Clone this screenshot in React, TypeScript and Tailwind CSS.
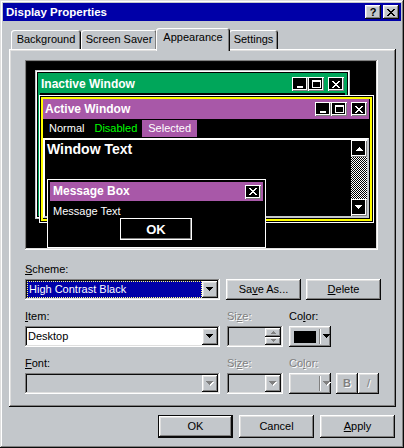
import React from "react";

const face = "bg-[#c3c7cb]";
const raised =
  "shadow-[inset_-1px_-1px_#0a0a0a,inset_1px_1px_#fff,inset_-2px_-2px_#808080,inset_2px_2px_#dfdfdf]";
const sunken =
  "shadow-[inset_-1px_-1px_#fff,inset_1px_1px_#808080,inset_-2px_-2px_#dfdfdf,inset_2px_2px_#0a0a0a]";
const disabledText = "text-[#808080] [text-shadow:1px_1px_0_#fff]";

function DropArrow({ disabled, color = "#000" }: { disabled?: boolean; color?: string }) {
  return (
    <svg width="8" height="5" viewBox="0 0 8 5" shapeRendering="crispEdges">
      {disabled && <path d="M1 1h7v1H1zM2 2h5v1H2zM3 3h3v1H3zM4 4h1v1H4z" fill="#fff" />}
      <path d="M0 0h7v1H0zM1 1h5v1H1zM2 2h3v1H2zM3 3h1v1H3z" fill={disabled ? "#808080" : color} />
    </svg>
  );
}

function UpArrow({ color }: { color: string }) {
  return (
    <svg width="7" height="4" viewBox="0 0 7 4" shapeRendering="crispEdges">
      <path d="M3 0h1v1H3zM2 1h3v1H2zM1 2h5v1H1zM0 3h7v1H0z" fill={color} />
    </svg>
  );
}

function XGlyph({ color }: { color: string }) {
  return (
    <svg width="8" height="7" viewBox="0 0 8 7" shapeRendering="crispEdges">
      <path
        d="M0 0h2v1H0zM6 0h2v1H6zM1 1h2v1H1zM5 1h2v1H5zM2 2h4v1H2zM3 3h2v1H3zM2 4h4v1H2zM1 5h2v1H1zM5 5h2v1H5zM0 6h2v1H0zM6 6h2v1H6z"
        fill={color}
      />
    </svg>
  );
}

function DropButton({ disabled }: { disabled?: boolean }) {
  return (
    <div className={`w-[16px] h-[17px] ${face} ${raised} flex items-center justify-center shrink-0`}>
      <DropArrow disabled={disabled} />
    </div>
  );
}

// black face buttons used inside the high contrast preview
function HcButton({ kind }: { kind: "min" | "max" | "close" }) {
  return (
    <div className="w-[16px] h-[14px] bg-black shadow-[inset_1px_1px_#fff,inset_-1px_-1px_#808080,inset_-2px_-2px_#fff] flex items-center justify-center">
      {kind === "min" && (
        <svg width="8" height="7" viewBox="0 0 8 7" shapeRendering="crispEdges">
          <path d="M1 5h6v2H1z" fill="#fff" />
        </svg>
      )}
      {kind === "max" && (
        <svg width="9" height="8" viewBox="0 0 9 8" shapeRendering="crispEdges">
          <path d="M0 0h9v2H0zM0 2h1v6H0zM8 2h1v6H8zM0 7h9v1H0z" fill="#fff" />
        </svg>
      )}
      {kind === "close" && <XGlyph color="#fff" />}
    </div>
  );
}

function Tab({ children, className }: { children: React.ReactNode; className: string }) {
  return (
    <div
      className={`h-[19px] ${className} ${face} rounded-t-[3px] shadow-[inset_1px_1px_#fff,inset_-1px_0_#0a0a0a,inset_-2px_0_#808080] flex items-center justify-center`}
    >
      {children}
    </div>
  );
}

function Button({
  children,
  className = "",
  primary,
}: {
  children: React.ReactNode;
  className?: string;
  primary?: boolean;
}) {
  return (
    <div
      className={`w-[75px] ${face} flex items-center justify-center ${
        primary
          ? "shadow-[inset_0_0_0_1px_#0a0a0a,inset_-2px_-2px_#0a0a0a,inset_2px_2px_#fff,inset_-3px_-3px_#808080,inset_3px_3px_#dfdfdf]"
          : raised
      } ${className}`}
    >
      {children}
    </div>
  );
}

function Preview() {
  return (
    <div className={`relative w-[353px] h-[190px] bg-black ${sunken}`}>
      {/* inactive window */}
      <div className="absolute left-[10px] top-[10px] w-[315px] h-[149px] border border-[#c3c7cb]">
        <div className="h-full border border-white">
          <div className="h-full border border-black">
            <div className="h-full border-2 border-[#00a65a] bg-black">
              <div className="h-[18px] bg-[#00a65a] flex items-center pl-[1px] pr-[1px]">
                <span className="font-bold text-white text-[12px]">Inactive Window</span>
                <div className="ml-auto flex">
                  <HcButton kind="min" />
                  <HcButton kind="max" />
                  <div className="ml-[4px]">
                    <HcButton kind="close" />
                  </div>
                </div>
              </div>
            </div>
          </div>
        </div>
      </div>

      {/* active window */}
      <div className="absolute left-[14px] top-[35px] w-[335px] h-[128px] border border-white">
        <div className="h-full border border-black">
          <div className="h-full border-2 border-[#ffff00] bg-black flex flex-col pr-[1px]">
            <div className="h-[20px] bg-[#a858a8] flex items-center pl-[2px] pr-[2px]">
              <span className="font-bold text-white text-[12px]">Active Window</span>
              <div className="ml-auto flex">
                <HcButton kind="min" />
                <HcButton kind="max" />
                <div className="ml-[4px]">
                  <HcButton kind="close" />
                </div>
              </div>
            </div>
            <div className="h-[19px] flex items-center text-[11px]">
              <span className="text-white pl-[6px] pr-[10px]">Normal</span>
              <span className="text-[#00ff00] pr-[5px]">Disabled</span>
              <span className="h-[17px] bg-[#a858a8] text-white px-[6px] flex items-center">Selected</span>
            </div>
            <div className="flex-1 mb-[1px] border-2 border-t-white border-l-white border-r-[#c3c7cb] border-b-[#c3c7cb] flex">
              <div className="flex-1 pl-[2px] pt-[1px] text-white font-bold text-[14px] leading-[16px]">Window Text</div>
              <div className="w-[16px] flex flex-col">
                <div className="h-[17px] bg-black shadow-[inset_1px_1px_#fff,inset_-1px_-1px_#808080,inset_-2px_-2px_#fff] flex items-center justify-center">
                  <UpArrow color="#fff" />
                </div>
                <div className="flex-1 bg-[image:repeating-conic-gradient(#fff_0_25%,#000_0_50%)] bg-[length:2px_2px]" />
                <div className="h-[17px] bg-black shadow-[inset_1px_1px_#fff,inset_-1px_-1px_#808080,inset_-2px_-2px_#fff] flex items-center justify-center">
                  <DropArrow color="#fff" />
                </div>
              </div>
            </div>
          </div>
        </div>
      </div>

      {/* message box */}
      <div className="absolute left-[22px] top-[119px] w-[219px] h-[69px] border border-white">
        <div className="h-full border-2 border-black bg-black">
          <div className="h-[19px] bg-[#a858a8] flex items-center pl-[3px] pr-[2px]">
            <span className="font-bold text-white text-[12px]">Message Box</span>
            <div className="ml-auto">
              <HcButton kind="close" />
            </div>
          </div>
          <div className="pl-[3px] pt-[4px] text-white text-[11px] leading-[13px]">Message Text</div>
          <div className="ml-[70px] w-[72px] h-[22px] border border-white shadow-[inset_-1px_-1px_#808080] flex items-center justify-center text-white font-bold text-[13px]">
            OK
          </div>
        </div>
      </div>
    </div>
  );
}

export default function App() {
  return (
    <div
      className={`w-[404px] h-[448px] ${face} p-[3px] flex flex-col font-['Liberation_Sans',Arial,sans-serif] text-[11px] leading-[13px] text-black shadow-[inset_-1px_-1px_#0a0a0a,inset_1px_1px_#dfdfdf,inset_-2px_-2px_#808080,inset_2px_2px_#fff]`}
    >
      {/* title bar */}
      <div className="h-[18px] bg-[#0000a8] flex items-center pl-[3px] pr-[2px]">
        <span className="font-bold text-white text-[11.5px]">Display Properties</span>
        <div className="ml-auto flex">
          <div className={`w-[16px] h-[14px] ${face} ${raised} flex items-center justify-center font-bold text-[11px] leading-none`}>
            ?
          </div>
          <div className={`ml-[2px] w-[16px] h-[14px] ${face} ${raised} flex items-center justify-center`}>
            <XGlyph color="#000" />
          </div>
        </div>
      </div>

      <div className="mt-[7px] ml-[6px] w-[387px]">
        {/* tabs */}
        <div className="flex items-end h-[21px] pl-[2px]">
          <Tab className="w-[70px]">Background</Tab>
          <Tab className="w-[76px]">Screen Saver</Tab>
          <div
            className={`relative z-10 w-[74px] h-[23px] -mb-[2px] -mx-[1px] ${face} rounded-t-[3px] shadow-[inset_1px_1px_#fff,inset_-1px_0_#0a0a0a,inset_-2px_0_#808080] flex justify-center pt-[3px]`}
          >
            Appearance
          </div>
          <Tab className="w-[49px]">Settings</Tab>
        </div>

        {/* panel */}
        <div className={`h-[358px] ${raised} pl-[16px] pt-[11px]`}>
          <Preview />

          {/* scheme */}
          <div className="mt-[13px] h-[13px]">
            <u>S</u>cheme:
          </div>
          <div className="mt-[3px] flex">
            <div className={`w-[195px] h-[21px] bg-white ${sunken} p-[2px] flex`}>
              <div className="flex-1 bg-[#0000a8] border border-dotted border-[#ffff80] text-white flex items-center pl-[1px]">
                High Contrast Black
              </div>
              <DropButton />
            </div>
            <Button className="ml-[6px] h-[21px]">
              Sa<u>v</u>e As...
            </Button>
            <Button className="ml-[5px] h-[21px]">
              <u>D</u>elete
            </Button>
          </div>

          {/* item */}
          <div className="mt-[10px] flex">
            <div className="w-[195px]">
              <div className="h-[13px]">
                <u>I</u>tem:
              </div>
              <div className={`mt-[3px] h-[21px] bg-white ${sunken} p-[2px] flex`}>
                <div className="flex-1 flex items-center pl-[1px]">Desktop</div>
                <DropButton />
              </div>
            </div>
            <div className="ml-[7px] w-[56px]">
              <div className={`h-[13px] ${disabledText}`}>
                Si<u>z</u>e:
              </div>
              <div className={`mt-[3px] h-[21px] ${face} ${sunken} p-[2px] flex justify-end`}>
                <div className="w-[16px] flex flex-col">
                  <div className={`flex-1 ${face} ${raised} flex items-center justify-center`}>
                    <svg width="5" height="3" viewBox="0 0 5 3" shapeRendering="crispEdges">
                      <path d="M2 0h1v1H2zM1 1h3v1H1zM0 2h5v1H0z" fill="#808080" />
                    </svg>
                  </div>
                  <div className={`flex-1 ${face} ${raised} flex items-center justify-center`}>
                    <svg width="5" height="3" viewBox="0 0 5 3" shapeRendering="crispEdges">
                      <path d="M0 0h5v1H0zM1 1h3v1H1zM2 2h1v1H2z" fill="#808080" />
                    </svg>
                  </div>
                </div>
              </div>
            </div>
            <div className="ml-[6px] w-[42px]">
              <div className="h-[13px]">
                Co<u>l</u>or:
              </div>
              <div className={`mt-[3px] h-[21px] ${face} ${raised} flex items-center pl-[5px]`}>
                <div className="w-[23px] h-[12px] bg-black" />
                <div className="ml-[3px] w-[2px] h-[15px] border-l border-l-[#808080] border-r border-r-white" />
                <div className="ml-[2px] flex">
                  <DropArrow />
                </div>
              </div>
            </div>
          </div>

          {/* font */}
          <div className="mt-[10px] flex">
            <div className="w-[195px]">
              <div className="h-[13px]">
                <u>F</u>ont:
              </div>
              <div className={`mt-[3px] h-[21px] ${face} ${sunken} p-[2px] flex justify-end`}>
                <DropButton disabled />
              </div>
            </div>
            <div className="ml-[7px] w-[56px]">
              <div className={`h-[13px] ${disabledText}`}>
                Si<u>z</u>e:
              </div>
              <div className={`mt-[3px] h-[21px] ${face} ${sunken} p-[2px] flex justify-end`}>
                <DropButton disabled />
              </div>
            </div>
            <div className="ml-[6px] w-[42px]">
              <div className={`h-[13px] ${disabledText}`}>
                Co<u>l</u>or:
              </div>
              <div className={`mt-[3px] h-[21px] ${face} ${raised} flex items-center pl-[5px]`}>
                <div className="w-[23px] h-[12px]" />
                <div className="ml-[3px] w-[2px] h-[15px] border-l border-l-[#808080] border-r border-r-white" />
                <div className="ml-[2px] flex">
                  <DropArrow disabled />
                </div>
              </div>
            </div>
            <div className="ml-[5px] self-end flex">
              <div className={`w-[22px] h-[21px] ${face} ${raised} flex items-center justify-center font-bold ${disabledText}`}>
                B
              </div>
              <div className={`w-[21px] h-[21px] ${face} ${raised} flex items-center justify-center ${disabledText}`}>
                /
              </div>
            </div>
          </div>
        </div>
      </div>

      {/* dialog buttons */}
      <div className="mt-[8px] flex justify-end gap-[6px] pr-[6px]">
        <Button primary className="h-[23px]">
          OK
        </Button>
        <Button className="h-[23px]">Cancel</Button>
        <Button className="h-[23px]">
          <u>A</u>pply
        </Button>
      </div>
    </div>
  );
}
